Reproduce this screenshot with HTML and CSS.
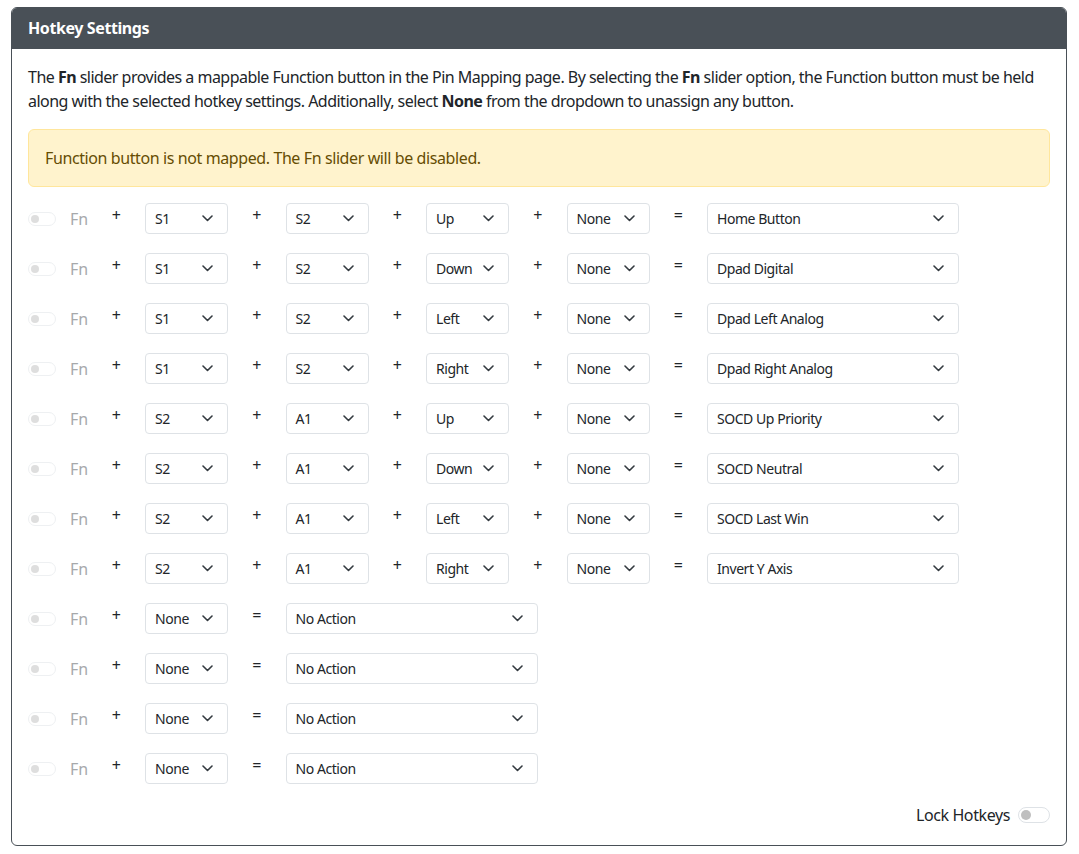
FILE: index.html
```html
<!DOCTYPE html>
<html lang="en">
<head>
<meta charset="utf-8">
<title>Hotkey Settings</title>
<link rel="stylesheet" href="styles.css">
</head>
<body>
<div class="card">
  <div class="card-header">Hotkey Settings</div>
  <div class="card-body">
    <p class="intro">The <strong>Fn</strong> slider provides a mappable Function button in the Pin Mapping page. By selecting the <strong>Fn</strong> slider option, the Function button must be held along with the selected hotkey settings. Additionally, select <strong>None</strong> from the dropdown to unassign any button.</p>
    <div class="alert">Function button is not mapped. The Fn slider will be disabled.</div>
    <div class="rows">
      <div class="hk-row">
        <div class="fn"><span class="switch sm"></span><span class="fn-label">Fn</span></div>
        <span class="op">+</span><div class="sel"><span>S1</span><svg viewBox="0 0 11 7"><path d="M1 1l4.5 4.5L10 1"/></svg></div>
        <span class="op">+</span><div class="sel"><span>S2</span><svg viewBox="0 0 11 7"><path d="M1 1l4.5 4.5L10 1"/></svg></div>
        <span class="op">+</span><div class="sel"><span>Up</span><svg viewBox="0 0 11 7"><path d="M1 1l4.5 4.5L10 1"/></svg></div>
        <span class="op">+</span><div class="sel"><span>None</span><svg viewBox="0 0 11 7"><path d="M1 1l4.5 4.5L10 1"/></svg></div>
        <span class="op">=</span><div class="sel wide"><span>Home Button</span><svg viewBox="0 0 11 7"><path d="M1 1l4.5 4.5L10 1"/></svg></div>
      </div>
      <div class="hk-row">
        <div class="fn"><span class="switch sm"></span><span class="fn-label">Fn</span></div>
        <span class="op">+</span><div class="sel"><span>S1</span><svg viewBox="0 0 11 7"><path d="M1 1l4.5 4.5L10 1"/></svg></div>
        <span class="op">+</span><div class="sel"><span>S2</span><svg viewBox="0 0 11 7"><path d="M1 1l4.5 4.5L10 1"/></svg></div>
        <span class="op">+</span><div class="sel"><span>Down</span><svg viewBox="0 0 11 7"><path d="M1 1l4.5 4.5L10 1"/></svg></div>
        <span class="op">+</span><div class="sel"><span>None</span><svg viewBox="0 0 11 7"><path d="M1 1l4.5 4.5L10 1"/></svg></div>
        <span class="op">=</span><div class="sel wide"><span>Dpad Digital</span><svg viewBox="0 0 11 7"><path d="M1 1l4.5 4.5L10 1"/></svg></div>
      </div>
      <div class="hk-row">
        <div class="fn"><span class="switch sm"></span><span class="fn-label">Fn</span></div>
        <span class="op">+</span><div class="sel"><span>S1</span><svg viewBox="0 0 11 7"><path d="M1 1l4.5 4.5L10 1"/></svg></div>
        <span class="op">+</span><div class="sel"><span>S2</span><svg viewBox="0 0 11 7"><path d="M1 1l4.5 4.5L10 1"/></svg></div>
        <span class="op">+</span><div class="sel"><span>Left</span><svg viewBox="0 0 11 7"><path d="M1 1l4.5 4.5L10 1"/></svg></div>
        <span class="op">+</span><div class="sel"><span>None</span><svg viewBox="0 0 11 7"><path d="M1 1l4.5 4.5L10 1"/></svg></div>
        <span class="op">=</span><div class="sel wide"><span>Dpad Left Analog</span><svg viewBox="0 0 11 7"><path d="M1 1l4.5 4.5L10 1"/></svg></div>
      </div>
      <div class="hk-row">
        <div class="fn"><span class="switch sm"></span><span class="fn-label">Fn</span></div>
        <span class="op">+</span><div class="sel"><span>S1</span><svg viewBox="0 0 11 7"><path d="M1 1l4.5 4.5L10 1"/></svg></div>
        <span class="op">+</span><div class="sel"><span>S2</span><svg viewBox="0 0 11 7"><path d="M1 1l4.5 4.5L10 1"/></svg></div>
        <span class="op">+</span><div class="sel"><span>Right</span><svg viewBox="0 0 11 7"><path d="M1 1l4.5 4.5L10 1"/></svg></div>
        <span class="op">+</span><div class="sel"><span>None</span><svg viewBox="0 0 11 7"><path d="M1 1l4.5 4.5L10 1"/></svg></div>
        <span class="op">=</span><div class="sel wide"><span>Dpad Right Analog</span><svg viewBox="0 0 11 7"><path d="M1 1l4.5 4.5L10 1"/></svg></div>
      </div>
      <div class="hk-row">
        <div class="fn"><span class="switch sm"></span><span class="fn-label">Fn</span></div>
        <span class="op">+</span><div class="sel"><span>S2</span><svg viewBox="0 0 11 7"><path d="M1 1l4.5 4.5L10 1"/></svg></div>
        <span class="op">+</span><div class="sel"><span>A1</span><svg viewBox="0 0 11 7"><path d="M1 1l4.5 4.5L10 1"/></svg></div>
        <span class="op">+</span><div class="sel"><span>Up</span><svg viewBox="0 0 11 7"><path d="M1 1l4.5 4.5L10 1"/></svg></div>
        <span class="op">+</span><div class="sel"><span>None</span><svg viewBox="0 0 11 7"><path d="M1 1l4.5 4.5L10 1"/></svg></div>
        <span class="op">=</span><div class="sel wide"><span>SOCD Up Priority</span><svg viewBox="0 0 11 7"><path d="M1 1l4.5 4.5L10 1"/></svg></div>
      </div>
      <div class="hk-row">
        <div class="fn"><span class="switch sm"></span><span class="fn-label">Fn</span></div>
        <span class="op">+</span><div class="sel"><span>S2</span><svg viewBox="0 0 11 7"><path d="M1 1l4.5 4.5L10 1"/></svg></div>
        <span class="op">+</span><div class="sel"><span>A1</span><svg viewBox="0 0 11 7"><path d="M1 1l4.5 4.5L10 1"/></svg></div>
        <span class="op">+</span><div class="sel"><span>Down</span><svg viewBox="0 0 11 7"><path d="M1 1l4.5 4.5L10 1"/></svg></div>
        <span class="op">+</span><div class="sel"><span>None</span><svg viewBox="0 0 11 7"><path d="M1 1l4.5 4.5L10 1"/></svg></div>
        <span class="op">=</span><div class="sel wide"><span>SOCD Neutral</span><svg viewBox="0 0 11 7"><path d="M1 1l4.5 4.5L10 1"/></svg></div>
      </div>
      <div class="hk-row">
        <div class="fn"><span class="switch sm"></span><span class="fn-label">Fn</span></div>
        <span class="op">+</span><div class="sel"><span>S2</span><svg viewBox="0 0 11 7"><path d="M1 1l4.5 4.5L10 1"/></svg></div>
        <span class="op">+</span><div class="sel"><span>A1</span><svg viewBox="0 0 11 7"><path d="M1 1l4.5 4.5L10 1"/></svg></div>
        <span class="op">+</span><div class="sel"><span>Left</span><svg viewBox="0 0 11 7"><path d="M1 1l4.5 4.5L10 1"/></svg></div>
        <span class="op">+</span><div class="sel"><span>None</span><svg viewBox="0 0 11 7"><path d="M1 1l4.5 4.5L10 1"/></svg></div>
        <span class="op">=</span><div class="sel wide"><span>SOCD Last Win</span><svg viewBox="0 0 11 7"><path d="M1 1l4.5 4.5L10 1"/></svg></div>
      </div>
      <div class="hk-row">
        <div class="fn"><span class="switch sm"></span><span class="fn-label">Fn</span></div>
        <span class="op">+</span><div class="sel"><span>S2</span><svg viewBox="0 0 11 7"><path d="M1 1l4.5 4.5L10 1"/></svg></div>
        <span class="op">+</span><div class="sel"><span>A1</span><svg viewBox="0 0 11 7"><path d="M1 1l4.5 4.5L10 1"/></svg></div>
        <span class="op">+</span><div class="sel"><span>Right</span><svg viewBox="0 0 11 7"><path d="M1 1l4.5 4.5L10 1"/></svg></div>
        <span class="op">+</span><div class="sel"><span>None</span><svg viewBox="0 0 11 7"><path d="M1 1l4.5 4.5L10 1"/></svg></div>
        <span class="op">=</span><div class="sel wide"><span>Invert Y Axis</span><svg viewBox="0 0 11 7"><path d="M1 1l4.5 4.5L10 1"/></svg></div>
      </div>
      <div class="hk-row">
        <div class="fn"><span class="switch sm"></span><span class="fn-label">Fn</span></div>
        <span class="op">+</span><div class="sel"><span>None</span><svg viewBox="0 0 11 7"><path d="M1 1l4.5 4.5L10 1"/></svg></div>
        <span class="op">=</span><div class="sel wide"><span>No Action</span><svg viewBox="0 0 11 7"><path d="M1 1l4.5 4.5L10 1"/></svg></div>
      </div>
      <div class="hk-row">
        <div class="fn"><span class="switch sm"></span><span class="fn-label">Fn</span></div>
        <span class="op">+</span><div class="sel"><span>None</span><svg viewBox="0 0 11 7"><path d="M1 1l4.5 4.5L10 1"/></svg></div>
        <span class="op">=</span><div class="sel wide"><span>No Action</span><svg viewBox="0 0 11 7"><path d="M1 1l4.5 4.5L10 1"/></svg></div>
      </div>
      <div class="hk-row">
        <div class="fn"><span class="switch sm"></span><span class="fn-label">Fn</span></div>
        <span class="op">+</span><div class="sel"><span>None</span><svg viewBox="0 0 11 7"><path d="M1 1l4.5 4.5L10 1"/></svg></div>
        <span class="op">=</span><div class="sel wide"><span>No Action</span><svg viewBox="0 0 11 7"><path d="M1 1l4.5 4.5L10 1"/></svg></div>
      </div>
      <div class="hk-row">
        <div class="fn"><span class="switch sm"></span><span class="fn-label">Fn</span></div>
        <span class="op">+</span><div class="sel"><span>None</span><svg viewBox="0 0 11 7"><path d="M1 1l4.5 4.5L10 1"/></svg></div>
        <span class="op">=</span><div class="sel wide"><span>No Action</span><svg viewBox="0 0 11 7"><path d="M1 1l4.5 4.5L10 1"/></svg></div>
      </div>
    </div>
    <div class="lock"><span>Lock Hotkeys</span><span class="switch"></span></div>
  </div>
</div>
</body>
</html>
```

FILE: styles.css
```css
* { box-sizing: border-box; }
html, body { margin: 0; background: #fff; }
body {
  padding: 7px 12px 0 11px;
  font-family: "Noto Sans", "DejaVu Sans", sans-serif;
  font-size: 16px;
  line-height: 24px;
  letter-spacing: -0.4px;
  color: #212529;
}
.card {
  border: 1px solid #495057;
  border-radius: 6px;
  overflow: hidden;
  width: 1056px;
}
.card-header {
  background: #495057;
  color: #fff;
  font-weight: 700;
  padding: 8px 16px;
  height: 41px;
}
.card-body { padding: 16px; }
.intro { margin: 0 0 16px; letter-spacing: -0.52px; }
.intro strong { font-weight: 700; }
.alert {
  background: #fff3cd;
  border: 1px solid #ffe69c;
  color: #664d03;
  border-radius: 6px;
  padding: 16px;
  margin-bottom: 16px;
}
.rows { display: flex; flex-direction: column; gap: 19px; }
.hk-row { display: flex; align-items: center; height: 31px; }
.fn { display: flex; align-items: center; width: 59.5px; }
.fn-label { color: #a7a9ab; margin-left: 14px; letter-spacing: 0; }
.op {
  align-self: flex-start;
  width: 57.5px;
  text-align: center;
  line-height: 24px;
}
.sel {
  width: 83px;
  height: 31px;
  border: 1px solid #dee2e6;
  border-radius: 4px;
  display: flex;
  align-items: center;
  justify-content: space-between;
  padding: 0 14px 0 9px;
  font-size: 14px;
  line-height: 21px;
  letter-spacing: -0.45px;
}
.sel.wide { width: 252px; }
.sel svg { width: 11px; height: 7px; flex: none; }
.sel svg path { fill: none; stroke: #343a40; stroke-width: 1.6; stroke-linecap: round; stroke-linejoin: round; }
.switch {
  display: inline-block;
  position: relative;
  width: 32px;
  height: 16px;
  border: 1px solid #dee2e6;
  border-radius: 8px;
  background: #fff;
  flex: none;
}
.switch::after {
  content: "";
  position: absolute;
  left: 2px;
  top: 2px;
  width: 10px;
  height: 10px;
  border-radius: 50%;
  background: #bfbfbf;
}
.switch.sm { width: 28px; height: 14px; border-radius: 7px; opacity: .5; }
.switch.sm::after { width: 8px; height: 8px; }
.lock {
  display: flex;
  justify-content: flex-end;
  align-items: center;
  gap: 8px;
  margin: 19px 0 2px;
  height: 24px;
}
```
